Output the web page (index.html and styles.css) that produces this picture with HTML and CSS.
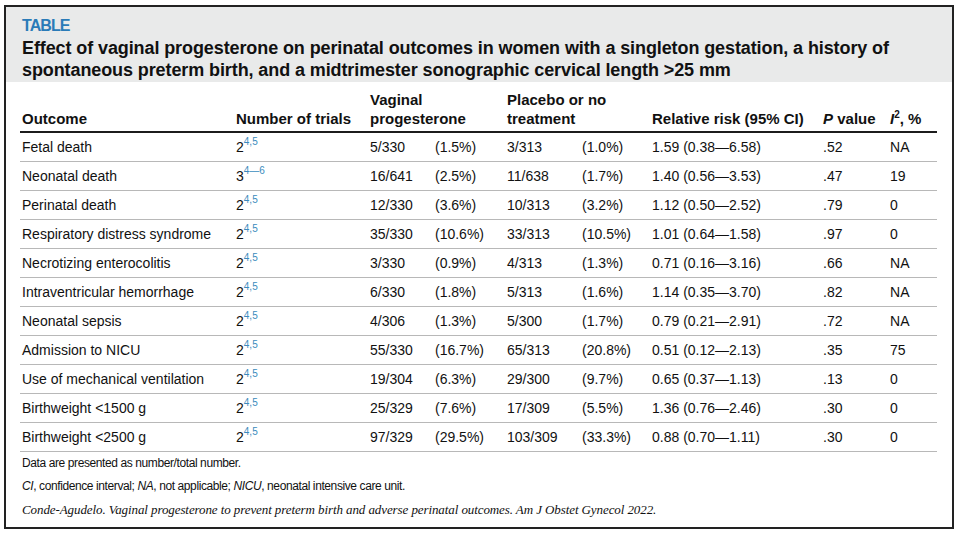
FILE: index.html
```html
<!DOCTYPE html>
<html lang="en">
<head>
<meta charset="utf-8">
<title>Table</title>
<link rel="stylesheet" href="styles.css">
</head>
<body>
<div class="frame">
  <div class="band">
    <div class="label">TABLE</div>
    <h1 class="title">Effect of vaginal progesterone on perinatal outcomes in women with a singleton gestation, a history of<br>spontaneous preterm birth, and a midtrimester sonographic cervical length &gt;25 mm</h1>
  </div>
  <table class="data">
    <colgroup>
      <col class="c-out"><col class="c-trials"><col class="c-n1"><col class="c-p1"><col class="c-n2"><col class="c-p2"><col class="c-rr"><col class="c-pv"><col class="c-i2">
    </colgroup>
    <thead>
      <tr>
        <th>Outcome</th>
        <th>Number of trials</th>
        <th colspan="2">Vaginal<br>progesterone</th>
        <th colspan="2">Placebo or no<br>treatment</th>
        <th>Relative risk (95% CI)</th>
        <th><i>P</i> value</th>
        <th><i>I</i><sup class="hsup">2</sup>, %</th>
      </tr>
    </thead>
    <tbody>
      <tr><td>Fetal death</td><td>2<sup class="ref">4,5</sup></td><td>5/330</td><td>(1.5%)</td><td>3/313</td><td>(1.0%)</td><td>1.59 (0.38—6.58)</td><td>.52</td><td>NA</td></tr>
      <tr><td>Neonatal death</td><td>3<sup class="ref">4—6</sup></td><td>16/641</td><td>(2.5%)</td><td>11/638</td><td>(1.7%)</td><td>1.40 (0.56—3.53)</td><td>.47</td><td>19</td></tr>
      <tr><td>Perinatal death</td><td>2<sup class="ref">4,5</sup></td><td>12/330</td><td>(3.6%)</td><td>10/313</td><td>(3.2%)</td><td>1.12 (0.50—2.52)</td><td>.79</td><td>0</td></tr>
      <tr><td>Respiratory distress syndrome</td><td>2<sup class="ref">4,5</sup></td><td>35/330</td><td>(10.6%)</td><td>33/313</td><td>(10.5%)</td><td>1.01 (0.64—1.58)</td><td>.97</td><td>0</td></tr>
      <tr><td>Necrotizing enterocolitis</td><td>2<sup class="ref">4,5</sup></td><td>3/330</td><td>(0.9%)</td><td>4/313</td><td>(1.3%)</td><td>0.71 (0.16—3.16)</td><td>.66</td><td>NA</td></tr>
      <tr><td>Intraventricular hemorrhage</td><td>2<sup class="ref">4,5</sup></td><td>6/330</td><td>(1.8%)</td><td>5/313</td><td>(1.6%)</td><td>1.14 (0.35—3.70)</td><td>.82</td><td>NA</td></tr>
      <tr><td>Neonatal sepsis</td><td>2<sup class="ref">4,5</sup></td><td>4/306</td><td>(1.3%)</td><td>5/300</td><td>(1.7%)</td><td>0.79 (0.21—2.91)</td><td>.72</td><td>NA</td></tr>
      <tr><td>Admission to NICU</td><td>2<sup class="ref">4,5</sup></td><td>55/330</td><td>(16.7%)</td><td>65/313</td><td>(20.8%)</td><td>0.51 (0.12—2.13)</td><td>.35</td><td>75</td></tr>
      <tr><td>Use of mechanical ventilation</td><td>2<sup class="ref">4,5</sup></td><td>19/304</td><td>(6.3%)</td><td>29/300</td><td>(9.7%)</td><td>0.65 (0.37—1.13)</td><td>.13</td><td>0</td></tr>
      <tr><td>Birthweight &lt;1500 g</td><td>2<sup class="ref">4,5</sup></td><td>25/329</td><td>(7.6%)</td><td>17/309</td><td>(5.5%)</td><td>1.36 (0.76—2.46)</td><td>.30</td><td>0</td></tr>
      <tr><td>Birthweight &lt;2500 g</td><td>2<sup class="ref">4,5</sup></td><td>97/329</td><td>(29.5%)</td><td>103/309</td><td>(33.3%)</td><td>0.88 (0.70—1.11)</td><td>.30</td><td>0</td></tr>
    </tbody>
  </table>
  <div class="notes">
    <p class="note">Data are presented as number/total number.</p>
    <p class="note"><i>CI</i>, confidence interval; <i>NA</i>, not applicable; <i>NICU</i>, neonatal intensive care unit.</p>
    <p class="cite">Conde-Agudelo. Vaginal progesterone to prevent preterm birth and adverse perinatal outcomes. Am J Obstet Gynecol 2022.</p>
  </div>
</div>
</body>
</html>
```

FILE: styles.css
```css
html, body {
  margin: 0;
  padding: 0;
  background: #ffffff;
}

body {
  font-family: "Liberation Sans", Arial, sans-serif;
  color: #111111;
}

.frame {
  box-sizing: border-box;
  width: 950px;
  height: 524px;
  margin: 5px 0 0 4px;
  border: 2px solid #222222;
  background: #ffffff;
}

.band {
  background: #e9eaea;
  padding: 10px 16px 0 16px;
  height: 75px;
  box-sizing: border-box;
}

.label {
  font-size: 16px;
  line-height: 18px;
  font-weight: bold;
  color: #2a7bb8;
  letter-spacing: -0.9px;
}

.title {
  margin: 2px 0 0 0;
  font-size: 18px;
  line-height: 22px;
  font-weight: bold;
  color: #111111;
  letter-spacing: -0.1px;
  white-space: nowrap;
}

.data {
  margin: 0 0 0 14px;
  width: 917px;
  border-collapse: collapse;
  table-layout: fixed;
}

.c-out { width: 214px; }
.c-trials { width: 134px; }
.c-n1 { width: 65px; }
.c-p1 { width: 72px; }
.c-n2 { width: 75px; }
.c-p2 { width: 70px; }
.c-rr { width: 171px; }
.c-pv { width: 67px; }
.c-i2 { width: 49px; }

.data th {
  text-align: left;
  vertical-align: bottom;
  font-size: 15px;
  line-height: 19px;
  font-weight: bold;
  padding: 8px 0 3px 2px;
  height: 38px;
  border-bottom: 2px solid #1c1c1c;
  white-space: nowrap;
}

.hsup {
  font-size: 10px;
  line-height: 0;
  vertical-align: 6px;
}

.data td {
  font-size: 14px;
  line-height: 18px;
  height: 28px;
  padding: 0 0 0 2px;
  vertical-align: middle;
  border-bottom: 1px solid #b8b8b8;
  white-space: nowrap;
}

.ref {
  font-size: 10px;
  line-height: 0;
  vertical-align: 7px;
  color: #3b8bbd;
}

.notes {
  padding: 0 16px;
}

.note {
  margin: 0;
  font-size: 12px;
  line-height: 23px;
  letter-spacing: -0.4px;
}

.cite {
  margin: 0;
  font-family: "Liberation Serif", "Times New Roman", serif;
  font-style: italic;
  font-size: 13px;
  line-height: 23px;
  letter-spacing: -0.09px;
}
```
